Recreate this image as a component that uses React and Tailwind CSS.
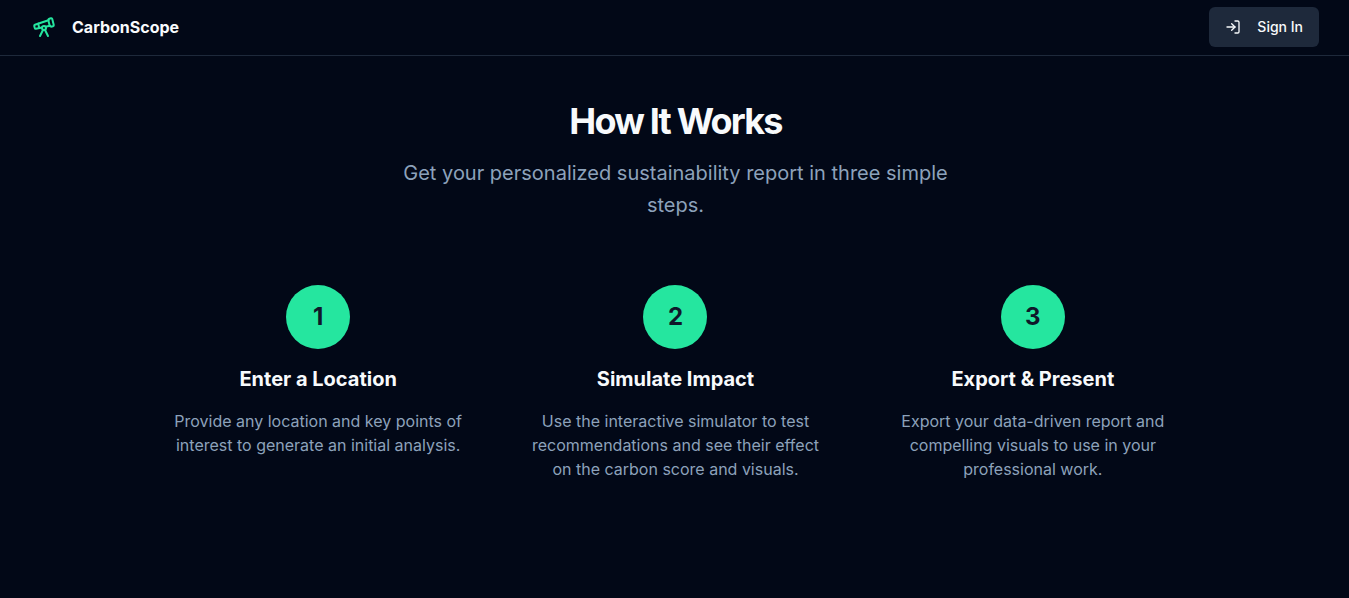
import { LogIn, Telescope } from 'lucide-react';

const steps = [
  {
    title: 'Enter a Location',
    text: 'Provide any location and key points of interest to generate an initial analysis.',
  },
  {
    title: 'Simulate Impact',
    text: 'Use the interactive simulator to test recommendations and see their effect on the carbon score and visuals.',
  },
  {
    title: 'Export & Present',
    text: 'Export your data-driven report and compelling visuals to use in your professional work.',
  },
];

function Header() {
  return (
    <header className="flex h-14 items-center justify-between border-b border-[#1e293b] pr-[30px] pb-px pl-8">
      <a href="#" className="flex items-center gap-4">
        <Telescope className="h-6 w-6 text-[#25e69f]" />
        <span className="font-bold">CarbonScope</span>
      </a>
      <button className="flex h-10 items-center gap-4 rounded-md bg-[#1e293b] px-4 text-sm font-medium">
        <LogIn className="h-4 w-4" />
        Sign In
      </button>
    </header>
  );
}

function Step({ number, title, text }) {
  return (
    <li className="flex flex-col items-center text-center">
      <div className="mb-4 flex h-16 w-16 items-center justify-center rounded-full bg-[#25e69f] text-2xl font-bold text-[#0f172a]">
        {number}
      </div>
      <h3 className="mb-4 text-xl font-bold">{title}</h3>
      <p className="text-[#8da2bb]">{text}</p>
    </li>
  );
}

export default function App() {
  return (
    <div className="min-h-screen bg-[#020817] font-['Inter',sans-serif] text-[#f8fafc]">
      <Header />
      <main className="pt-[45px] pr-[30px] pb-12 pl-8">
        <div className="mx-auto max-w-xl text-center">
          <h2 className="text-4xl font-bold tracking-tighter">How It Works</h2>
          <p className="mt-4 text-xl/8 text-[#8da2bb]">
            Get your personalized sustainability report in three simple steps.
          </p>
        </div>
        <ol className="mx-auto mt-16 grid max-w-5xl grid-cols-3 gap-12">
          {steps.map((step, i) => (
            <Step key={step.title} number={i + 1} title={step.title} text={step.text} />
          ))}
        </ol>
      </main>
    </div>
  );
}
